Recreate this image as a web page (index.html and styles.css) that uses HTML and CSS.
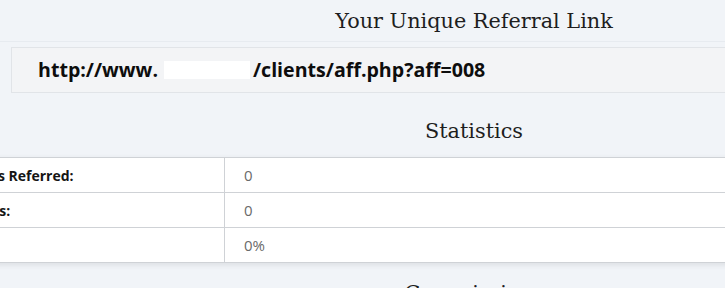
FILE: index.html
```html
<!DOCTYPE html>
<html lang="en">
<head>
<meta charset="utf-8">
<title>Affiliates</title>
<link rel="stylesheet" href="styles.css">
</head>
<body>
<div class="page">
  <h2 class="heading heading-first">Your Unique Referral Link</h2>
  <div class="well">
    <span class="link">http://www.<span class="redact"></span>/clients/aff.php?aff=008</span>
  </div>
  <h2 class="heading heading-stats">Statistics</h2>
  <table class="stats">
    <tr><td class="label">Number of Visitors Referred:</td><td class="value">0</td></tr>
    <tr><td class="label">Number of Signups:</td><td class="value">0</td></tr>
    <tr><td class="label">Conversion Rate:</td><td class="value">0%</td></tr>
  </table>
  <h2 class="heading heading-next">Commissions</h2>
</div>
</body>
</html>
```
FILE: styles.css
```css
html, body {
  margin: 0;
  padding: 0;
  background: #f1f4f8;
  overflow: hidden;
}
.page {
  margin-left: -140px;
  width: 1228px;
  font-family: "Open Sans", "Liberation Sans", sans-serif;
  color: #222;
}
.heading {
  margin: 0;
  font-family: "DejaVu Serif", "Liberation Serif", serif;
  font-weight: normal;
  font-size: 20.8px;
  line-height: 30px;
  text-align: center;
  color: #1e1e1e;
}
.heading-first {
  padding-top: 6px;
  padding-bottom: 5px;
  border-bottom: 1px solid #e7ebf0;
}
.heading-stats {
  margin-top: 23px;
}
.heading-next {
  margin-top: 15px;
}
.well {
  margin: 5px 0 0 151px;
  width: 924px;
  height: 44px;
  background: #f3f4f6;
  border: 1px solid #e1e4e8;
  display: flex;
  align-items: center;
}
.link {
  padding-left: 26px;
  font-size: 19.6px;
  font-weight: bold;
  line-height: 44px;
  color: #0d0d0d;
  display: flex;
  align-items: center;
}
.redact {
  display: inline-block;
  width: 86px;
  height: 18px;
  background: #fff;
  margin-left: 6px;
  margin-right: 3px;
}
.stats {
  margin-top: 11px;
  width: 100%;
  border-collapse: collapse;
  background: #fff;
  box-shadow: 0 2px 6px rgba(0, 0, 0, 0.09);
  border-top: 1px solid #cfd2d6;
}
.stats td {
  height: 34px;
  padding: 0;
  border-bottom: 1px solid #cfd2d6;
}
.stats .label {
  width: 351px;
  padding-left: 13px;
  font-size: 14px;
  font-weight: bold;
  color: #151515;
  border-right: 1px solid #cfd2d6;
}
.stats .value {
  padding-left: 19px;
  font-size: 15px;
  color: #6a6a6a;
}
```
